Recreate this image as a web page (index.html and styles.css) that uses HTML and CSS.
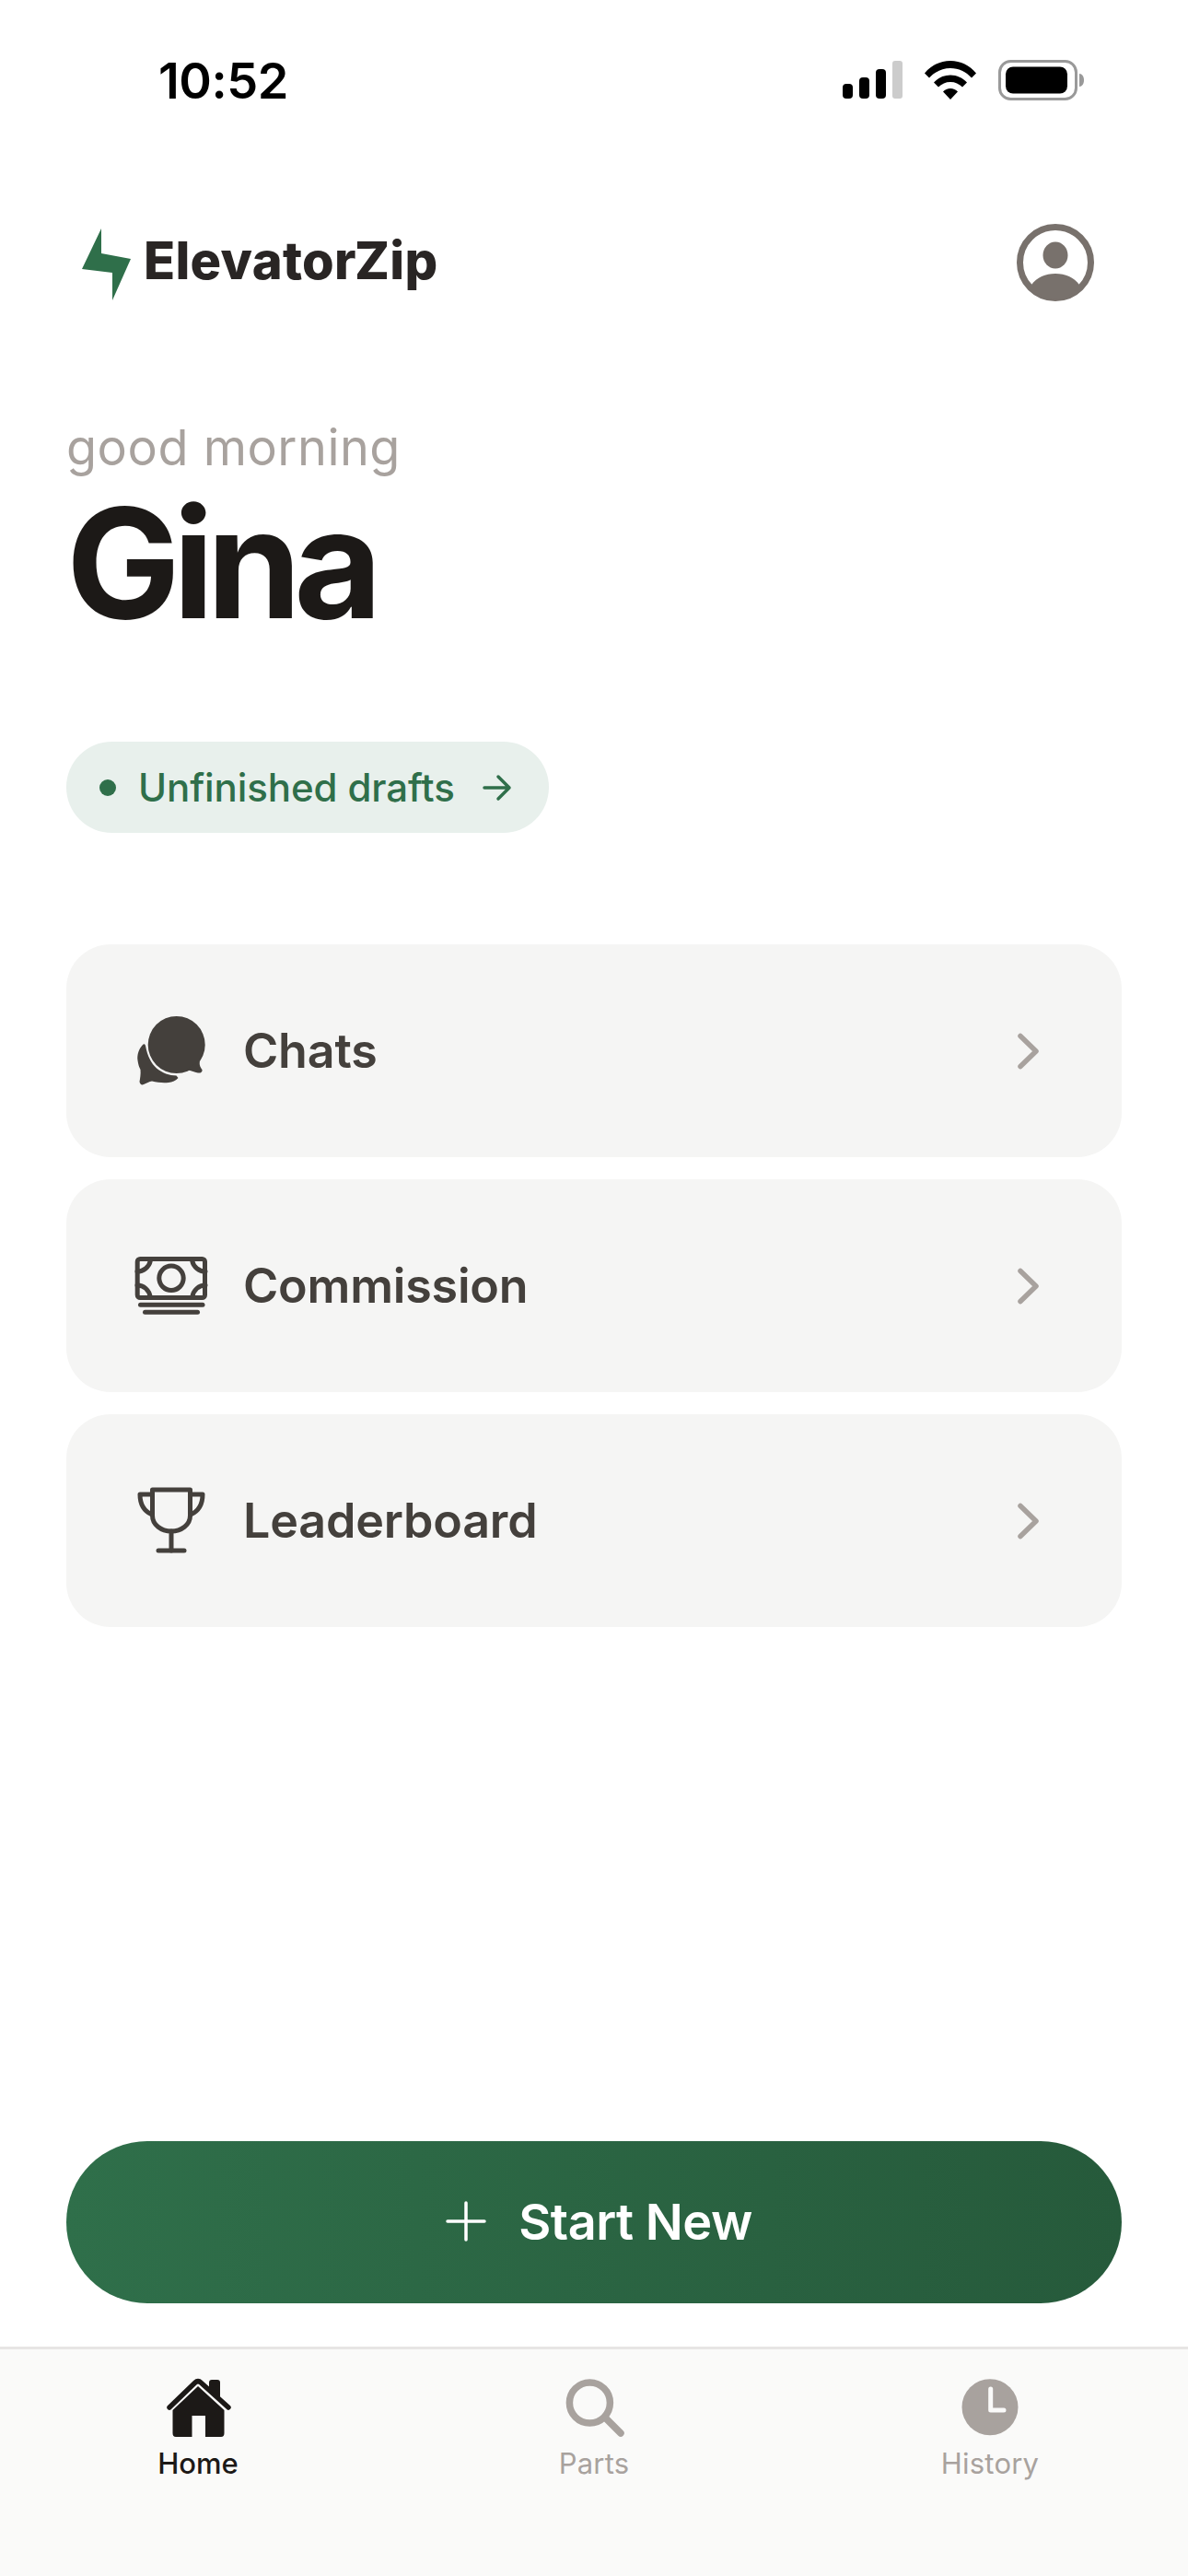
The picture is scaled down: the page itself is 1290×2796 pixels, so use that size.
FILE: index.html
```html
<!DOCTYPE html>
<html lang="en">
<head>
  <meta charset="UTF-8" />
  <meta name="viewport" content="width=device-width, initial-scale=1.0"/>
  <title>ElevatorZip</title>
  <link rel="stylesheet" href="styles.css">
</head>
<body>

  <div class="status-bar">
    <span class="time">10:52</span>
    <div class="status-icons">
      <svg width="66" height="42" viewBox="0 0 66 42">
        <rect x="1" y="25" width="11" height="16" rx="4" fill="#000"/>
        <rect x="19" y="18" width="11" height="23" rx="4" fill="#000"/>
        <rect x="37" y="9" width="11" height="32" rx="4" fill="#000"/>
        <rect x="55" y="0" width="11" height="41" rx="3" fill="#ccc"/>
      </svg>
      <svg width="58" height="44" viewBox="0 0 58 44">
        <path d="M1 14.5 C8 6 18 1 29 1 C40 1 50 6 57 14.5 L52 19.5 C46 13 38 9 29 9 C20 9 12 13 6 19.5 Z" fill="#000"/>
        <path d="M11 24.5 C15.5 19.5 22 16.5 29 16.5 C36 16.5 42.5 19.5 47 24.5 L42 29.5 C38.5 26 34 24 29 24 C24 24 19.5 26 16 29.5 Z" fill="#000"/>
        <path d="M21 34.5 C23 32.5 26 31 29 31 C32 31 35 32.5 37 34.5 L29 43 Z" fill="#000"/>
      </svg>
      <svg width="94" height="44" viewBox="0 0 94 44">
        <rect x="1.5" y="1.5" width="83" height="41" rx="12" fill="none" stroke="#999" stroke-width="3"/>
        <rect x="8" y="7.500" width="67" height="29" rx="8" fill="#000"/>
        <path d="M88 15 C91 15 93 18 93 22 C93 26 91 29 88 29 Z" fill="#999"/>
      </svg>
    </div>
  </div>

  <header class="top-bar">
    <div class="logo">
      <svg width="60" height="84" viewBox="0 0 60 84">
        <path d="M24 2 L24 29 L56 35 L36 80 L36 50 L3 46 Z" fill="#2f6f4a"/>
      </svg>
      <span class="logo-name">ElevatorZip</span>
    </div>
    <svg class="avatar" width="84" height="84" viewBox="0 0 84 84">
      <circle cx="42" cy="42" r="38.500" fill="none" stroke="#78716c" stroke-width="7"/>
      <ellipse cx="42" cy="34" rx="13.500" ry="14.500" fill="#78716c"/>
      <path d="M16 66 C22 58 31 54 42 54 C53 54 62 58 68 66 C62 76 52 82 42 82 C32 82 22 76 16 66 Z" fill="#78716c"/>
    </svg>
  </header>

  <main class="greeting">
    <p class="hello">good morning</p>
    <h1>Gina</h1>
  </main>

  <a class="drafts" href="#">
    <span class="drafts-dot"></span>
    <span class="drafts-text">Unfinished drafts</span>
    <svg width="32" height="30" viewBox="0 0 32 30">
      <path d="M2 15 H29 M17 3 L29 15 L17 27" fill="none" stroke="#2f6f4a" stroke-width="3.500" stroke-linecap="round" stroke-linejoin="round"/>
    </svg>
  </a>

  <div class="menu">
    <a class="menu-row" href="#">
      <svg class="menu-icon" width="84" height="84" viewBox="0 0 84 84">
        <path d="M11 35 C7 39 4.500 46 5.500 52 C6 56 7 59 8.500 62 C9 67 8 72 7.500 75 C8 78 10 79 12 78 C15 77 18 75 21 74.500 C27 76 33 76.500 39 76 C43 75.500 47 74 49.500 71 L47.500 68.500 C40 68.500 32 65.500 26 60.500 C20 55 16 47 14 36 C13.500 34 12 34 11 35 Z" fill="#44403c"/>
        <circle cx="47.700" cy="35" r="31" fill="#44403c"/>
        <path d="M70 54 L73 53 C72 57 74 60 75.500 62 C76 65 73 66 71 65.500 C67 64.500 63 63 58 62 Z" fill="#44403c"/>
      </svg>
      <span class="menu-label">Chats</span>
      <svg class="chevron" width="28" height="44" viewBox="0 0 28 44">
        <path d="M3 5.500 L20 22 L3 38.500" fill="none" stroke="#a8a29e" stroke-width="5.500" stroke-linecap="round" stroke-linejoin="round"/>
      </svg>
    </a>
    <a class="menu-row" href="#">
      <svg class="menu-icon" width="84" height="84" viewBox="0 0 84 84">
        <g fill="none" stroke="#44403c" stroke-width="5" stroke-linecap="round">
          <rect x="5.200" y="12.500" width="73.300" height="42" rx="3"/>
          <circle cx="42" cy="33.300" r="13.200"/>
          <path d="M5 26 C12 26 18 21 19.300 14.500"/>
          <path d="M79 26 C72 26 66 21 64.700 14.500"/>
          <path d="M5 41 C12 41 18 46 19.300 54"/>
          <path d="M79 41 C72 41 66 46 64.700 54"/>
          <path d="M8.500 62.300 H76"/>
          <path d="M13.500 70.300 H70.500"/>
        </g>
      </svg>
      <span class="menu-label">Commission</span>
      <svg class="chevron" width="28" height="44" viewBox="0 0 28 44">
        <path d="M3 5.500 L20 22 L3 38.500" fill="none" stroke="#a8a29e" stroke-width="5.500" stroke-linecap="round" stroke-linejoin="round"/>
      </svg>
    </a>
    <a class="menu-row" href="#">
      <svg class="menu-icon" width="84" height="84" viewBox="0 0 84 84">
        <g fill="none" stroke="#44403c" stroke-width="5" stroke-linecap="round" stroke-linejoin="round">
          <path d="M21.500 8 H62.500 V36 C62.500 46 53 53 42 53 C31 53 21.500 46 21.500 36 Z"/>
          <path d="M21 13 H8 C8 24 12 31 21 35"/>
          <path d="M63 13 H76 C76 24 72 31 63 35"/>
          <path d="M42 53 V74"/>
          <path d="M28 74 H56"/>
        </g>
      </svg>
      <span class="menu-label">Leaderboard</span>
      <svg class="chevron" width="28" height="44" viewBox="0 0 28 44">
        <path d="M3 5.500 L20 22 L3 38.500" fill="none" stroke="#a8a29e" stroke-width="5.500" stroke-linecap="round" stroke-linejoin="round"/>
      </svg>
    </a>
  </div>

  <button class="start-btn">
    <svg width="46" height="46" viewBox="0 0 46 46">
      <path d="M23 3 V43 M3 23 H43" fill="none" stroke="#fff" stroke-width="3.500" stroke-linecap="round"/>
    </svg>
    <span>Start New</span>
  </button>

  <nav class="tab-bar">
    <a class="tab tab-active" href="#">
      <svg width="80" height="70" viewBox="0 0 80 70">
        <path d="M9 35 L37 8 Q40 5 43 8 L73 35" fill="none" stroke="#1c1917" stroke-width="5.500" stroke-linecap="round" stroke-linejoin="round"/>
        <path d="M52 16 V8 Q52 5 55 5 H61 Q64 5 64 8 V27 Z" fill="#1c1917"/>
        <path d="M12.500 38 L40 12 L68.500 38 V63 Q68.500 67 65 67 H48 V44 H33.500 V67 H16 Q12.500 67 12.500 63 Z" fill="#1c1917"/>
      </svg>
      <span>Home</span>
    </a>
    <a class="tab" href="#">
      <svg width="80" height="70" viewBox="0 0 80 70">
        <ellipse cx="35.400" cy="30" rx="22" ry="22" fill="none" stroke="#a8a29e" stroke-width="7.500"/>
        <path d="M53 47 L69 63" fill="none" stroke="#a8a29e" stroke-width="7.500" stroke-linecap="round"/>
      </svg>
      <span>Parts</span>
    </a>
    <a class="tab" href="#">
      <svg width="80" height="70" viewBox="0 0 80 70">
        <circle cx="40" cy="34.700" r="30.500" fill="#a8a29e"/>
        <path d="M40.700 15 V38 H55" fill="none" stroke="#fafaf9" stroke-width="5" stroke-linecap="round" stroke-linejoin="round"/>
      </svg>
      <span>History</span>
    </a>
  </nav>

</body>
</html>
```

FILE: styles.css
```css
* {
  box-sizing: border-box;
}
body {
  font-family: Inter, sans-serif;
  background-color: #fff;
  color: #1c1917;
  margin: 0;
  padding: 0;
  width: 1290px;
  height: 2796px;
  display: flex;
  flex-direction: column;
  overflow: hidden;
}
a {
  text-decoration: none;
  color: inherit;
}
svg {
  display: block;
  flex-shrink: 0;
}
.status-bar {
  height: 174px;
  padding: 0 112px 0 172px;
  display: flex;
  align-items: center;
  justify-content: space-between;
}
.time {
  font-size: 54px;
  font-weight: 600;
  letter-spacing: -0.5px;
  color: #000;
}
.status-icons {
  display: flex;
  align-items: center;
  gap: 23px;
}
.top-bar {
  margin-top: 69px;
  padding: 0 102px 0 86px;
  display: flex;
  align-items: center;
  justify-content: space-between;
}
.logo {
  height: 84px;
  display: flex;
  align-items: center;
  gap: 10px;
}
.logo svg {
  margin-top: 6px;
}
.logo-name {
  font-size: 56px;
  font-weight: 800;
  letter-spacing: 0.3px;
  color: #292524;
  margin-bottom: 4px;
}
.greeting {
  padding: 0 72px;
  margin-top: 127px;
}
.hello {
  margin: 0;
  font-size: 54px;
  line-height: 64px;
  letter-spacing: 0.5px;
  color: #a8a29e;
}
h1 {
  margin: 3px 0 0;
  font-size: 165px;
  line-height: 180px;
  font-weight: 700;
  letter-spacing: -8px;
  color: #1c1917;
}
.drafts {
  align-self: flex-start;
  margin: 104px 0 0 72px;
  height: 99px;
  padding: 0 40px 0 36px;
  border-radius: 50px;
  background-color: #e8f0ec;
  color: #2f6f4a;
  display: flex;
  align-items: center;
}
.drafts-dot {
  width: 18px;
  height: 18px;
  border-radius: 50%;
  background-color: #2f6f4a;
  margin-right: 24px;
}
.drafts-text {
  font-size: 42px;
  font-weight: 500;
  letter-spacing: -0.1px;
  margin-right: 30px;
}
.menu {
  margin: 121px 72px 0;
  display: flex;
  flex-direction: column;
  gap: 24px;
}
.menu-row {
  height: 231px;
  padding: 0 85px 0 72px;
  border-radius: 48px;
  background-color: #f5f5f4;
  display: flex;
  align-items: center;
}
.menu-icon {
  margin-right: 36px;
}
.menu-label {
  flex: 1;
  font-size: 52px;
  font-weight: 600;
  letter-spacing: -0.2px;
  color: #44403c;
}
.start-btn {
  margin: auto 72px 0;
  height: 176px;
  padding: 0 0 2px 10px;
  border: none;
  border-radius: 88px;
  background: linear-gradient(90deg, #2f6f4a, #265a3b);
  color: #fff;
  font-family: Inter, sans-serif;
  font-size: 54px;
  font-weight: 600;
  letter-spacing: -0.5px;
  display: flex;
  align-items: center;
  justify-content: center;
  gap: 34px;
}
.tab-bar {
  margin-top: 47px;
  height: 249px;
  padding-top: 28px;
  border-top: 3px solid #e7e5e4;
  background-color: #fafaf9;
  display: flex;
  align-items: flex-start;
}
.tab {
  flex: 1;
  display: flex;
  flex-direction: column;
  align-items: center;
  gap: 7px;
  font-size: 31px;
  letter-spacing: 0.2px;
  color: #a8a29e;
}
.tab-active {
  color: #1c1917;
  font-weight: 500;
  letter-spacing: 0;
}
```
